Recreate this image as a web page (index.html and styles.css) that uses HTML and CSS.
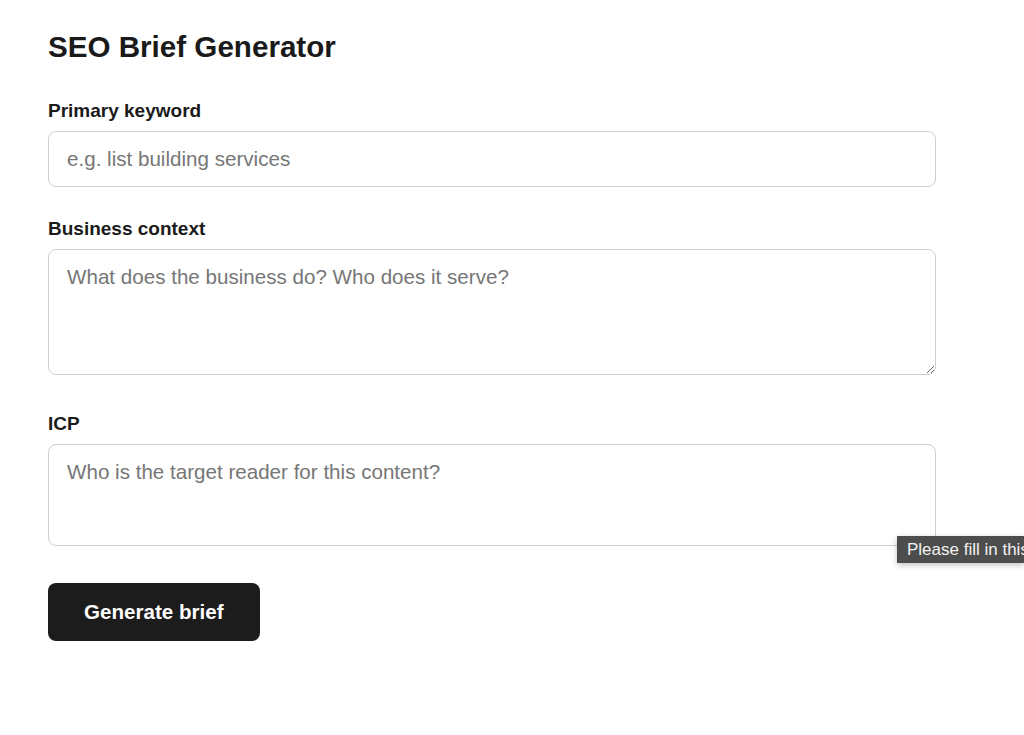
FILE: index.html
```html
<!DOCTYPE html>
<html lang="en">
<head>
<meta charset="utf-8">
<title>SEO Brief Generator</title>
<link rel="stylesheet" href="styles.css">
</head>
<body>
<main class="page">
  <h1 class="title">SEO Brief Generator</h1>
  <form class="form">
    <div class="field">
      <label class="label" for="kw">Primary keyword</label>
      <input class="control input" id="kw" type="text" placeholder="e.g. list building services">
    </div>
    <div class="field field-area">
      <label class="label" for="ctx">Business context</label>
      <textarea class="control area area-lg" id="ctx" placeholder="What does the business do? Who does it serve?"></textarea>
    </div>
    <div class="field field-last">
      <label class="label" for="icp">ICP</label>
      <textarea class="control area area-sm" id="icp" placeholder="Who is the target reader for this content?"></textarea>
      <div class="bubble">Please fill in this field.</div>
    </div>
    <button class="btn" type="button">Generate brief</button>
  </form>
</main>
</body>
</html>
```

FILE: styles.css
```css
html, body {
  margin: 0;
  padding: 0;
  background: #ffffff;
  overflow: hidden;
}

body {
  font-family: "Liberation Sans", Arial, Helvetica, sans-serif;
  color: #1a1a1a;
}

.page {
  padding: 30px 88px 0 48px;
  width: 888px;
}

.title {
  margin: 0 0 37px;
  font-size: 29.6px;
  line-height: 33px;
  font-weight: 700;
  color: #1a1a1a;
}

.form {
  display: flex;
  flex-direction: column;
  align-items: flex-start;
}

.field {
  width: 100%;
  margin-bottom: 31px;
  position: relative;
}

.field-area {
  margin-bottom: 38px;
}

.field-last {
  margin-bottom: 37px;
}

.label {
  display: block;
  font-size: 19px;
  line-height: 21px;
  font-weight: 700;
  margin-bottom: 10px;
  color: #1a1a1a;
}

.control {
  display: block;
  box-sizing: border-box;
  width: 100%;
  margin: 0;
  font-family: "Liberation Sans", Arial, Helvetica, sans-serif;
  font-size: 20.6px;
  line-height: 23px;
  color: #1a1a1a;
  background: #ffffff;
  border: 1.5px solid #cfcfcf;
  border-radius: 8px;
  padding: 15px 18px;
  outline: none;
}

.control::placeholder {
  color: #767676;
  opacity: 1;
}

.input {
  height: 56px;
}

.area {
  resize: vertical;
}

.area-lg {
  height: 126px;
}

.area-sm {
  height: 102px;
}

.bubble {
  position: absolute;
  left: 849px;
  bottom: -17px;
  box-sizing: border-box;
  width: 127px;
  overflow: hidden;
  background: #4d4d4d;
  color: #f2f2f2;
  font-size: 17px;
  line-height: 27px;
  height: 27px;
  padding: 0 0 0 10px;
  white-space: nowrap;
  box-shadow: 0 2px 6px rgba(0, 0, 0, 0.25);
}

.btn {
  display: inline-block;
  font-family: "Liberation Sans", Arial, Helvetica, sans-serif;
  font-size: 20.6px;
  font-weight: 700;
  color: #ffffff;
  background: #1c1c1c;
  border: none;
  border-radius: 8px;
  height: 58px;
  padding: 0 36px;
  cursor: pointer;
}
```
